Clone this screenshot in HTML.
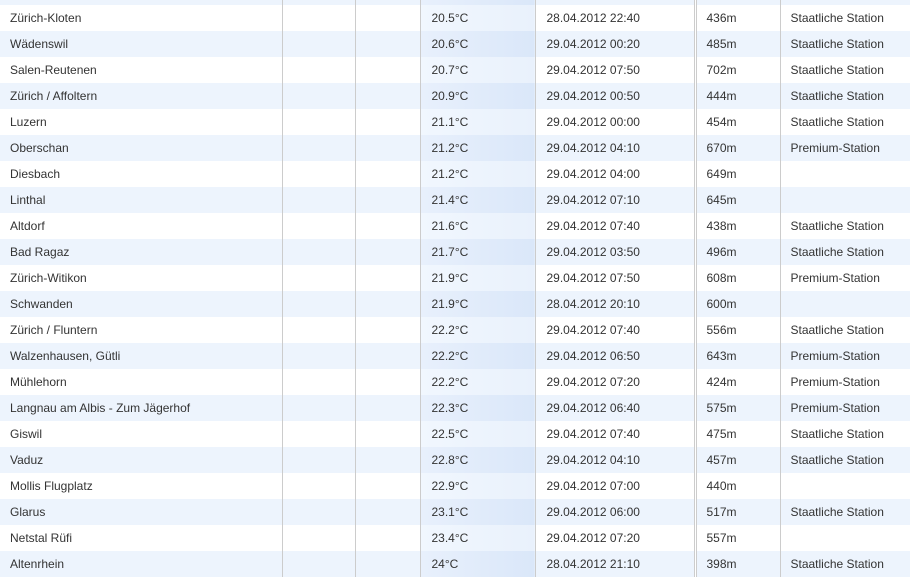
<!DOCTYPE html>
<html><head><meta charset="utf-8"><style>
body{margin:0;width:910px;height:575px;overflow:hidden;background:#fff;font-family:"Liberation Sans",Arial,sans-serif;font-size:12px;color:#333;}
table{border-collapse:collapse;position:absolute;top:-21px;left:0;width:910px;table-layout:fixed}
td{height:26px;padding:0;white-space:nowrap;overflow:hidden}
tr:nth-child(odd) td{background:#edf4fd}
td.n{padding-left:10px}
td.e1{border-left:1px solid #ccc}
td.e2{border-left:1px solid #ccc}
td.t{padding-left:11px;border-left:1px solid #ccc;background:linear-gradient(90deg,#f1f7fe,#e9f1fc)!important}
tr:nth-child(odd) td.t{background:linear-gradient(90deg,#e8f0fc,#dae7f9)!important}
td.d{padding-left:11px;border-left:1px solid #ccc}
td.a{padding-left:10px;border-left:3px double #ccc}
td.s{padding-left:10px;border-left:1px solid #ccc}
</style></head><body>
<table>
<colgroup><col style="width:282px"><col style="width:73px"><col style="width:65px"><col style="width:115px"><col style="width:160px"><col style="width:85px"><col style="width:130px"></colgroup>
<tr><td class="n"></td><td class="e1"></td><td class="e2"></td><td class="t"></td><td class="d"></td><td class="a"></td><td class="s"></td></tr>
<tr><td class="n">Zürich-Kloten</td><td class="e1"></td><td class="e2"></td><td class="t">20.5°C</td><td class="d">28.04.2012 22:40</td><td class="a">436m</td><td class="s">Staatliche Station</td></tr>
<tr><td class="n">Wädenswil</td><td class="e1"></td><td class="e2"></td><td class="t">20.6°C</td><td class="d">29.04.2012 00:20</td><td class="a">485m</td><td class="s">Staatliche Station</td></tr>
<tr><td class="n">Salen-Reutenen</td><td class="e1"></td><td class="e2"></td><td class="t">20.7°C</td><td class="d">29.04.2012 07:50</td><td class="a">702m</td><td class="s">Staatliche Station</td></tr>
<tr><td class="n">Zürich / Affoltern</td><td class="e1"></td><td class="e2"></td><td class="t">20.9°C</td><td class="d">29.04.2012 00:50</td><td class="a">444m</td><td class="s">Staatliche Station</td></tr>
<tr><td class="n">Luzern</td><td class="e1"></td><td class="e2"></td><td class="t">21.1°C</td><td class="d">29.04.2012 00:00</td><td class="a">454m</td><td class="s">Staatliche Station</td></tr>
<tr><td class="n">Oberschan</td><td class="e1"></td><td class="e2"></td><td class="t">21.2°C</td><td class="d">29.04.2012 04:10</td><td class="a">670m</td><td class="s">Premium-Station</td></tr>
<tr><td class="n">Diesbach</td><td class="e1"></td><td class="e2"></td><td class="t">21.2°C</td><td class="d">29.04.2012 04:00</td><td class="a">649m</td><td class="s"></td></tr>
<tr><td class="n">Linthal</td><td class="e1"></td><td class="e2"></td><td class="t">21.4°C</td><td class="d">29.04.2012 07:10</td><td class="a">645m</td><td class="s"></td></tr>
<tr><td class="n">Altdorf</td><td class="e1"></td><td class="e2"></td><td class="t">21.6°C</td><td class="d">29.04.2012 07:40</td><td class="a">438m</td><td class="s">Staatliche Station</td></tr>
<tr><td class="n">Bad Ragaz</td><td class="e1"></td><td class="e2"></td><td class="t">21.7°C</td><td class="d">29.04.2012 03:50</td><td class="a">496m</td><td class="s">Staatliche Station</td></tr>
<tr><td class="n">Zürich-Witikon</td><td class="e1"></td><td class="e2"></td><td class="t">21.9°C</td><td class="d">29.04.2012 07:50</td><td class="a">608m</td><td class="s">Premium-Station</td></tr>
<tr><td class="n">Schwanden</td><td class="e1"></td><td class="e2"></td><td class="t">21.9°C</td><td class="d">28.04.2012 20:10</td><td class="a">600m</td><td class="s"></td></tr>
<tr><td class="n">Zürich / Fluntern</td><td class="e1"></td><td class="e2"></td><td class="t">22.2°C</td><td class="d">29.04.2012 07:40</td><td class="a">556m</td><td class="s">Staatliche Station</td></tr>
<tr><td class="n">Walzenhausen, Gütli</td><td class="e1"></td><td class="e2"></td><td class="t">22.2°C</td><td class="d">29.04.2012 06:50</td><td class="a">643m</td><td class="s">Premium-Station</td></tr>
<tr><td class="n">Mühlehorn</td><td class="e1"></td><td class="e2"></td><td class="t">22.2°C</td><td class="d">29.04.2012 07:20</td><td class="a">424m</td><td class="s">Premium-Station</td></tr>
<tr><td class="n">Langnau am Albis - Zum Jägerhof</td><td class="e1"></td><td class="e2"></td><td class="t">22.3°C</td><td class="d">29.04.2012 06:40</td><td class="a">575m</td><td class="s">Premium-Station</td></tr>
<tr><td class="n">Giswil</td><td class="e1"></td><td class="e2"></td><td class="t">22.5°C</td><td class="d">29.04.2012 07:40</td><td class="a">475m</td><td class="s">Staatliche Station</td></tr>
<tr><td class="n">Vaduz</td><td class="e1"></td><td class="e2"></td><td class="t">22.8°C</td><td class="d">29.04.2012 04:10</td><td class="a">457m</td><td class="s">Staatliche Station</td></tr>
<tr><td class="n">Mollis Flugplatz</td><td class="e1"></td><td class="e2"></td><td class="t">22.9°C</td><td class="d">29.04.2012 07:00</td><td class="a">440m</td><td class="s"></td></tr>
<tr><td class="n">Glarus</td><td class="e1"></td><td class="e2"></td><td class="t">23.1°C</td><td class="d">29.04.2012 06:00</td><td class="a">517m</td><td class="s">Staatliche Station</td></tr>
<tr><td class="n">Netstal Rüfi</td><td class="e1"></td><td class="e2"></td><td class="t">23.4°C</td><td class="d">29.04.2012 07:20</td><td class="a">557m</td><td class="s"></td></tr>
<tr><td class="n">Altenrhein</td><td class="e1"></td><td class="e2"></td><td class="t">24°C</td><td class="d">28.04.2012 21:10</td><td class="a">398m</td><td class="s">Staatliche Station</td></tr>
</table>
</body></html>
